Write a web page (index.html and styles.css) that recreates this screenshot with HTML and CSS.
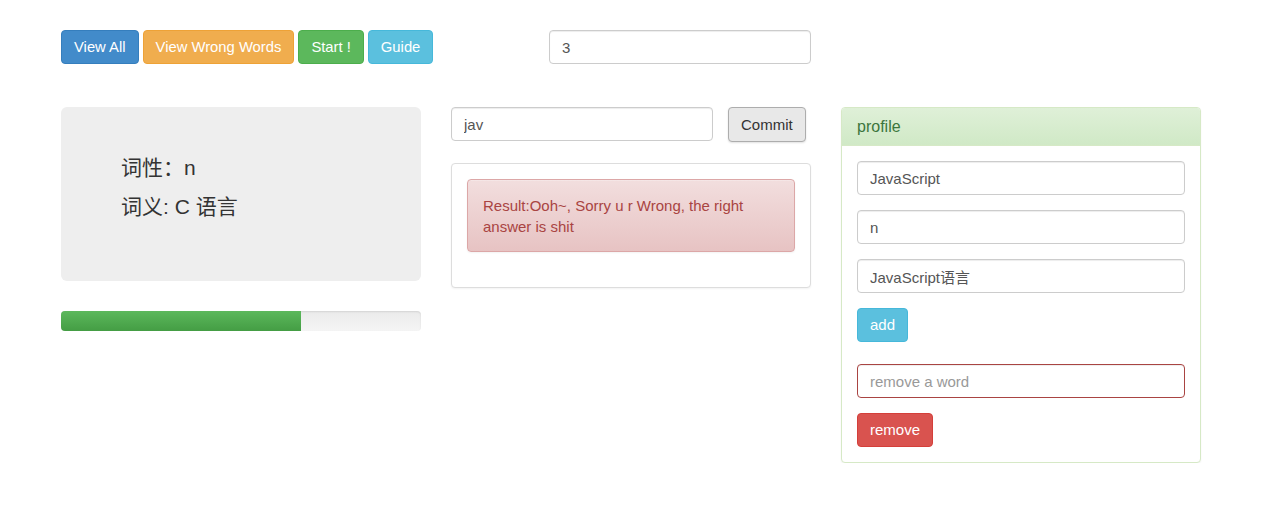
FILE: index.html
```html
<!DOCTYPE html>
<html>
<head>
<meta charset="utf-8">
<link rel="stylesheet" href="styles.css">
</head>
<body>
<div class="container">
  <div class="toolbar">
    <div class="btn-group">
      <button class="btn btn-primary">View All</button>
      <button class="btn btn-warning">View Wrong Words</button>
      <button class="btn btn-success">Start !</button>
      <button class="btn btn-info">Guide</button>
    </div>
    <input class="form-control count-input" type="text" value="3">
  </div>
  <div class="row">
    <div class="col">
      <div class="jumbotron">
        <p class="word-line">词性：n</p>
        <p class="word-line">词义: C 语言</p>
      </div>
      <div class="progress"><div class="progress-bar" style="width:66.67%"></div></div>
    </div>
    <div class="col">
      <div class="answer-form">
        <input class="form-control answer-input" type="text" value="jav">
        <button class="btn btn-default commit">Commit</button>
      </div>
      <div class="panel result-panel">
        <div class="panel-body">
          <div class="alert alert-danger">Result:Ooh~, Sorry u r Wrong, the right answer is shit</div>
        </div>
      </div>
    </div>
    <div class="col">
      <div class="panel panel-success">
        <div class="panel-heading">profile</div>
        <div class="panel-body profile-body">
          <input class="form-control field" type="text" value="JavaScript">
          <input class="form-control field" type="text" value="n">
          <input class="form-control field" type="text" value="JavaScript语言">
          <button class="btn btn-info add-btn">add</button>
          <input class="form-control field error" type="text" placeholder="remove a word">
          <button class="btn btn-danger">remove</button>
        </div>
      </div>
    </div>
  </div>
</div>
</body>
</html>
```
FILE: styles.css
```css
* { box-sizing: border-box; }
body {
  margin: 0;
  font-family: "Liberation Sans", Arial, "Noto Sans CJK SC", sans-serif;
  font-size: 15px;
  line-height: 20px;
  color: #333;
  background: #fff;
}
.container {
  width: 1140px;
  margin: 0 auto;
}
.toolbar {
  display: grid;
  grid-template-columns: 360px 360px 360px;
  column-gap: 30px;
  margin-top: 30px;
  align-items: start;
}
.btn-group {
  display: flex;
  gap: 4px;
  white-space: nowrap;
}
.btn-group .btn { font-size: 14.8px; }
.btn {
  display: inline-block;
  padding: 6px 12px;
  font-family: inherit;
  font-size: 15px;
  line-height: 20px;
  border: 1px solid transparent;
  border-radius: 4px;
  color: #fff;
  cursor: pointer;
  white-space: nowrap;
  flex: none;
}
.btn-primary { background: #428bca; border-color: #357ebd; }
.btn-warning { background: #f0ad4e; border-color: #eea236; }
.btn-success { background: #5cb85c; border-color: #4cae4c; }
.btn-info { background: #5bc0de; border-color: #46b8da; }
.btn-danger { background: #d9534f; border-color: #d43f3a; }
.btn-default {
  background: #e8e8e8;
  border-color: #adadad;
  color: #333;
  box-shadow: 0 1px 2px rgba(0,0,0,.12);
}
.form-control {
  display: block;
  height: 34px;
  padding: 6px 12px;
  font-family: inherit;
  font-size: 15px;
  line-height: 20px;
  color: #555;
  background: #fff;
  border: 1px solid #ccc;
  border-radius: 4px;
  box-shadow: inset 0 1px 1px rgba(0,0,0,.075);
  outline: none;
}
.form-control::placeholder { color: #999; }
.count-input {
  width: 262px;
  margin-left: 98px;
}
.row {
  display: grid;
  grid-template-columns: 360px 360px 360px;
  column-gap: 30px;
  margin-top: 43px;
  align-items: start;
}
.jumbotron {
  background: #eee;
  border-radius: 6px;
  padding: 48px 60px 48px;
  height: 174px;
}
.word-line {
  margin: 0 0 13px;
  font-size: 21px;
  line-height: 26px;
  color: #333;
}
.progress {
  margin-top: 30px;
  height: 20px;
  border-radius: 4px;
  overflow: hidden;
  background: linear-gradient(to bottom, #ebebeb 0%, #f5f5f5 100%);
  box-shadow: inset 0 1px 2px rgba(0,0,0,.1);
}
.progress-bar {
  height: 100%;
  background: linear-gradient(to bottom, #5cb85c 0%, #449d44 100%);
}
.answer-form {
  display: flex;
  align-items: flex-start;
}
.answer-input { width: 262px; }
.commit { margin-left: 15px; height: 35px; }
.panel {
  background: #fff;
  border: 1px solid #ddd;
  border-radius: 4px;
  box-shadow: 0 1px 2px rgba(0,0,0,.05);
}
.result-panel { margin-top: 21px; }
.panel-body { padding: 15px; }
.alert {
  padding: 15px 15px 14px;
  line-height: 21px;
  border: 1px solid #dca7a7;
  border-radius: 4px;
  margin-bottom: 20px;
  color: #a94442;
  background: linear-gradient(to bottom, #f2dede 0%, #e7c3c3 100%);
  box-shadow: inset 0 1px 0 rgba(255,255,255,.25), 0 1px 2px rgba(0,0,0,.05);
}
.panel-success { border-color: #d6e9c6; }
.panel-heading {
  padding: 10px 15px;
  font-size: 16px;
  line-height: 17px;
  color: #3c763d;
  background: linear-gradient(to bottom, #dff0d8 0%, #d0e9c6 100%);
  border-bottom: 1px solid #d6e9c6;
  border-radius: 3px 3px 0 0;
}
.profile-body {
  display: flex;
  flex-direction: column;
  align-items: flex-start;
}
.field {
  width: 100%;
  margin-bottom: 15px;
}
.add-btn { margin-bottom: 22px; }
.field.error { border-color: #a94442; margin-bottom: 15px; }
```
